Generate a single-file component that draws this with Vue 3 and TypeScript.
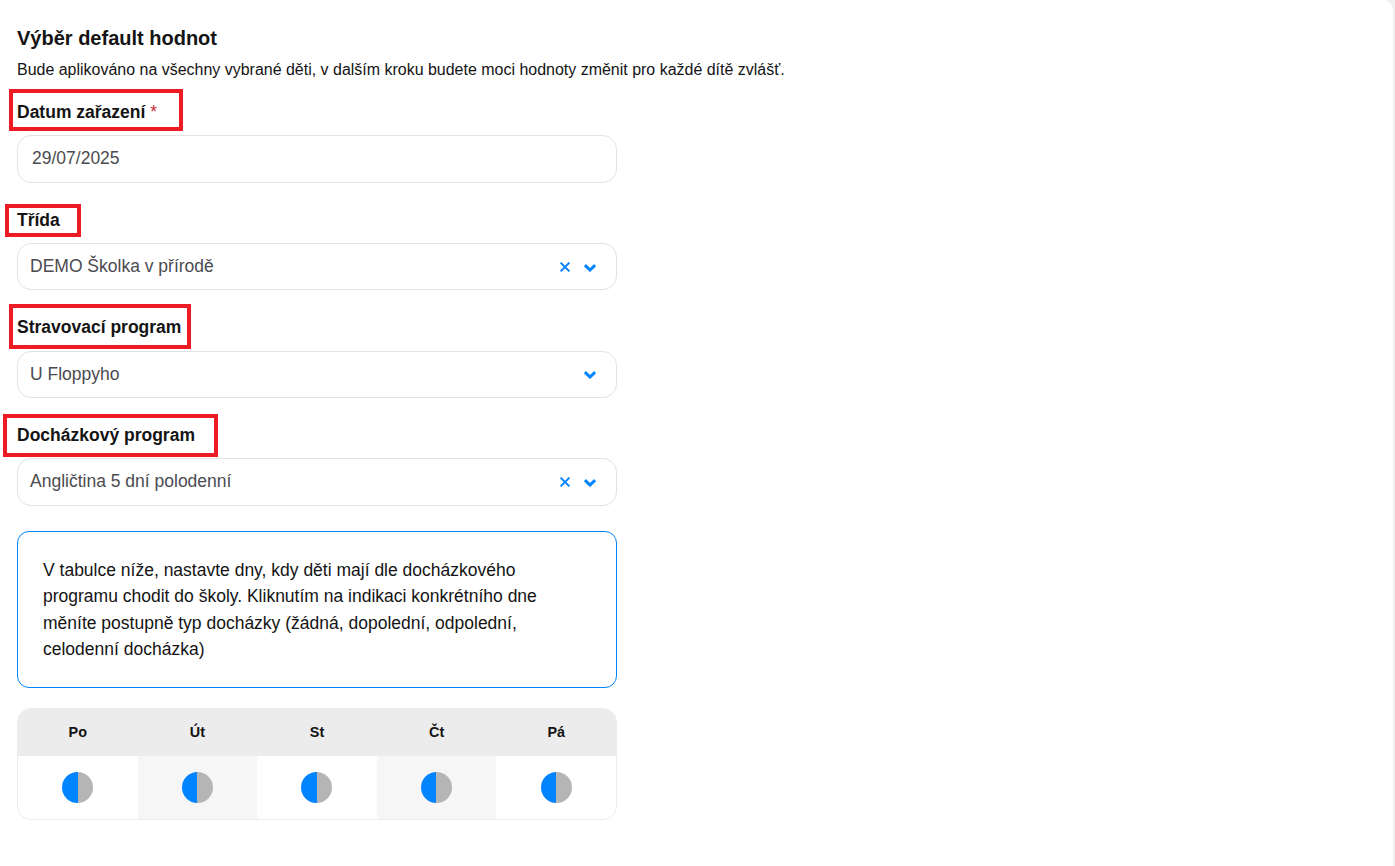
<script setup lang="ts">
type Field = {
  label: string
  value: string
  required?: boolean
  clearable?: boolean
  date?: boolean
  mark: string
}

const fields: Field[] = [
  { label: "Datum zařazení", value: "29/07/2025", required: true, date: true, mark: "mark-date" },
  { label: "Třída", value: "DEMO Školka v přírodě", clearable: true, mark: "mark-class" },
  { label: "Stravovací program", value: "U Floppyho", mark: "mark-food" },
  { label: "Docházkový program", value: "Angličtina 5 dní polodenní", clearable: true, mark: "mark-attendance" },
]

const days = ["Po", "Út", "St", "Čt", "Pá"]
</script>

<template>
  <div class="page">
    <main class="card">
      <h1 class="title">Výběr default hodnot</h1>
      <p class="subtitle">Bude aplikováno na všechny vybrané děti, v dalším kroku budete moci hodnoty změnit pro každé dítě zvlášť.</p>

      <div class="form">
        <div v-for="field in fields" :key="field.label" class="field">
          <label class="label">
            {{ field.label }}<span v-if="field.required" class="required"> *</span>
            <span class="mark" :class="field.mark"></span>
          </label>
          <div class="control" :class="{ 'control-date': field.date }">
            <span class="value">{{ field.value }}</span>
            <span v-if="!field.date" class="icons">
              <svg v-if="field.clearable" class="icon-clear" viewBox="0 0 12 12" width="12" height="12">
                <path d="M1.6 1.6 10.4 10.4M10.4 1.6 1.6 10.4" fill="none" stroke="#0084ff" stroke-width="2" />
              </svg>
              <svg class="icon-chevron" viewBox="0 0 14 10" width="14" height="10">
                <path d="M1.9 3.1 7 8 12.1 3.1" fill="none" stroke="#0084ff" stroke-width="3" />
              </svg>
            </span>
          </div>
        </div>
      </div>

      <div class="info">
        V tabulce níže, nastavte dny, kdy děti mají dle docházkového programu chodit do školy. Kliknutím na indikaci konkrétního dne měníte postupně typ docházky (žádná, dopolední, odpolední, celodenní docházka)
      </div>

      <div class="table">
        <div v-for="day in days" :key="day" class="head-cell">{{ day }}</div>
        <div v-for="day in days" :key="day + '-cell'" class="cell">
          <span class="half"></span>
        </div>
      </div>
    </main>
  </div>
</template>

<style scoped>
.page {
  height: 866px;
  background: #f0f0f0;
  overflow: hidden;
}

.card {
  box-sizing: border-box;
  width: 1393px;
  height: 866px;
  padding: 27px 17px 0;
  background: #fff;
  border-radius: 0 10px 0 0;
  color: #141414;
  font-family: "Liberation Sans", Arial, sans-serif;
}

.title {
  margin: 0;
  font-size: 20px;
  line-height: 23px;
  font-weight: 700;
}

.subtitle {
  margin: 8px 0 0;
  font-size: 15.98px;
  line-height: 24px;
}

.form {
  display: flex;
  flex-direction: column;
  width: 600px;
  margin-top: 17px;
  gap: 24.1px;
}

.label {
  position: relative;
  display: block;
  height: 26.4px;
  margin-bottom: 9.8px;
  font-size: 17.5px;
  line-height: 26.4px;
  font-weight: 700;
}

.required {
  color: #c8303a;
  font-weight: 400;
}

.mark {
  position: absolute;
  box-sizing: border-box;
  border: 4px solid #ed1c24;
}

.mark-date {
  left: -8px;
  top: -10px;
  width: 174px;
  height: 42px;
}

.mark-class {
  left: -12px;
  top: -3px;
  width: 76px;
  height: 33px;
}

.mark-food {
  left: -8px;
  top: -10px;
  width: 182px;
  height: 45px;
}

.mark-attendance {
  left: -14px;
  top: -8px;
  width: 215px;
  height: 43px;
}

.control {
  box-sizing: border-box;
  display: flex;
  align-items: center;
  justify-content: space-between;
  height: 47.4px;
  padding: 0 19px 0 12px;
  border: 1px solid #e2e2e2;
  border-radius: 14px;
  background: #fff;
}

.control-date {
  padding-left: 14px;
}

.value {
  font-size: 17.5px;
  color: #4b4b50;
}

.icons {
  display: flex;
  align-items: center;
  gap: 12px;
}

.info {
  box-sizing: border-box;
  width: 600px;
  height: 157px;
  margin-top: 25.3px;
  padding: 25px 25px 0;
  border: 1px solid #0084ff;
  border-radius: 12px;
  font-size: 17.5px;
  line-height: 26.4px;
}

.table {
  display: grid;
  grid-template-columns: repeat(5, 1fr);
  grid-template-rows: 47px 63px;
  width: 600px;
  margin-top: 20px;
  box-sizing: border-box;
  border: 1px solid #ececec;
  border-radius: 14px;
  overflow: hidden;
}

.head-cell {
  display: flex;
  align-items: center;
  justify-content: center;
  background: #ececec;
  font-size: 14.4px;
  font-weight: 700;
}

.cell {
  display: flex;
  align-items: center;
  justify-content: center;
}

.cell:nth-child(odd) {
  background: #f6f6f6;
}

.half {
  width: 31px;
  height: 31px;
  border-radius: 50%;
  background: linear-gradient(90deg, #0084ff 50%, #b5b5b5 50%);
}
</style>
